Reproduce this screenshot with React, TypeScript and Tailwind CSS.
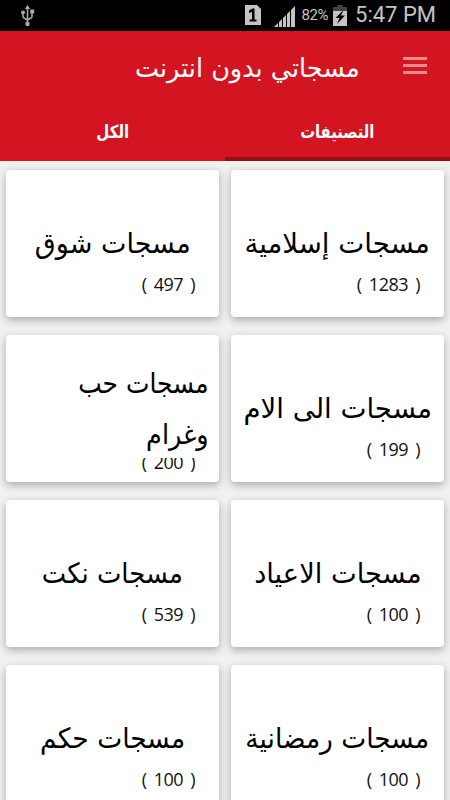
interface Line {
  text: string;
  scale: number;
}

interface Category {
  name: Line[];
  count: number;
}

const categories: Category[] = [
  { name: [{ text: "مسجات إسلامية", scale: 0.985 }], count: 1283 },
  { name: [{ text: "مسجات شوق", scale: 0.965 }], count: 497 },
  { name: [{ text: "مسجات الى الام", scale: 0.985 }], count: 199 },
  {
    name: [
      { text: "مسجات حب", scale: 0.89 },
      { text: "وغرام", scale: 0.91 },
    ],
    count: 200,
  },
  { name: [{ text: "مسجات الاعياد", scale: 0.975 }], count: 100 },
  { name: [{ text: "مسجات نكت", scale: 0.925 }], count: 539 },
  { name: [{ text: "مسجات رمضانية", scale: 0.945 }], count: 100 },
  { name: [{ text: "مسجات حكم", scale: 0.947 }], count: 100 },
];

const StatusBar = () => (
  <div className="flex h-[31px] items-center bg-black pl-[21px] pr-[14px] font-['Roboto',sans-serif] text-[#c4c4c4]">
    <svg className="h-[22px] w-[14px]" viewBox="0 0 14 22" fill="none" stroke="#aaa" strokeWidth="1.5">
      <path d="M6.5 2v17M2 8v3.500q0 1 1 1.500l3.500 2M11 6v5.500q0 1-1 1.500l-3.500 2" />
      <path d="M6.500 0 9.200 4H3.800z" fill="#aaa" stroke="none" />
      <circle cx="6.500" cy="19" r="2.200" fill="#aaa" stroke="none" />
      <circle cx="2" cy="7.500" r="2" fill="#aaa" stroke="none" />
      <path d="M9.200 4.500h4v4h-4z" fill="#aaa" stroke="none" />
    </svg>
    <svg className="-mt-0.5 ml-auto h-5 w-4 shrink-0" viewBox="0 0 16 20">
      <path d="M0 0h12l4 4v16H0z" fill="#c4c4c4" />
      <path d="M4 5.500 7.500 3.500h2V14.500h2v2H4.500v-2H7V7L4 8z" fill="#000" />
    </svg>
    <svg className="ml-[13px] mt-0.5 h-[21px] w-[21px] shrink-0" viewBox="0 0 21 21" fill="#c4c4c4">
      <path d="M0 21 4 17v4zM5 16l3-3v8H5zM9 12l3-3v12H9zM13 8l3-3v16h-3zM17 4l4-4v21h-4z" />
    </svg>
    <span className="ml-[6px] text-[15px] leading-none tracking-[-0.4px]">82%</span>
    <svg className="-mt-px ml-[5px] h-[21px] w-[14px] shrink-0" viewBox="0 0 14 21">
      <path d="M4.500 0h5v2H14v5H0V2h4.500z" fill="#444" />
      <path d="M0 6h14v15H0z" fill="#c4c4c4" />
      <path d="M10.500 5 2.500 13h4L4 19l8-8.500H8z" fill="#000" />
    </svg>
    <span className="-mt-px ml-2 text-[22px] leading-none">5:47 PM</span>
  </div>
);

const Header = () => (
  <header className="bg-[#d31421] text-white">
    <div className="flex h-[69px] items-center justify-between pl-[135px] pr-[23px]" dir="ltr">
      <h1 className="origin-left scale-x-[0.98] pt-1 text-[26px] leading-none" dir="rtl">
        مسجاتي بدون انترنت
      </h1>
      <div className="flex flex-col gap-1">
        <div className="h-[3px] w-6 bg-[#ea8b91]" />
        <div className="h-[3px] w-6 bg-[#ea8b91]" />
        <div className="h-[3px] w-6 bg-[#ea8b91]" />
      </div>
    </div>
    <nav className="grid h-[61px] grid-cols-2 text-[18px] font-bold" dir="rtl">
      <button className="border-b-4 border-[#950e17] pt-1.5">
        <span className="inline-block scale-x-[0.82]">التصنيفات</span>
      </button>
      <button className="border-b-4 border-transparent pt-1.5">
        <span className="inline-block scale-x-[0.83]">الكل</span>
      </button>
    </nav>
  </header>
);

const CategoryCard = ({ category }: { category: Category }) => {
  const wrapped = category.name.length > 1;

  return (
    <div
      className={`relative flex h-[147px] items-center rounded bg-white px-2.5 shadow-[0_3px_8px_rgba(0,0,0,0.3)] ${
        wrapped ? "justify-start" : "justify-center"
      }`}
    >
      <h2 className="whitespace-nowrap text-[28px] leading-[51px]">
        {category.name.map((line) => (
          <span
            key={line.text}
            className={`block ${wrapped ? "origin-right" : "origin-center"}`}
            style={{ transform: `scaleX(${line.scale})` }}
          >
            {line.text}
          </span>
        ))}
      </h2>
      <p
        className={`absolute right-6 font-['Open_Sans',sans-serif] text-[18px] leading-[27px] tracking-[-0.5px] text-[#111] [word-spacing:3px] ${
          wrapped ? "top-[114px] [clip-path:inset(9px_0_0_0)]" : "top-[101px]"
        }`}
      >
        ( {category.count} )
      </p>
    </div>
  );
};

const App = () => (
  <div className="h-[800px] w-[450px] overflow-hidden bg-[#f1f1f1] font-['DejaVu_Sans',sans-serif]">
    <StatusBar />
    <Header />
    <main className="grid grid-cols-2 gap-x-3 gap-y-[18px] px-1.5 pt-[9px] text-black" dir="rtl">
      {categories.map((category) => (
        <CategoryCard key={category.name[0].text} category={category} />
      ))}
    </main>
  </div>
);

export default App;
